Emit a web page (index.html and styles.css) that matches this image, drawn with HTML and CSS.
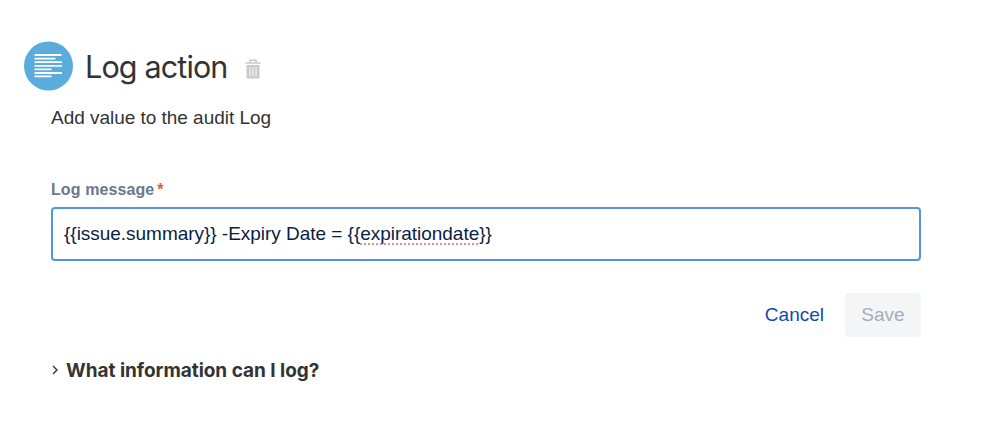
FILE: index.html
```html
<!DOCTYPE html>
<html lang="en">
<head>
    <meta charset="UTF-8">
    <meta name="viewport" content="width=device-width, initial-scale=1.0">
    <title>Log action</title>
    <link rel="stylesheet" href="styles.css">
</head>
<body>

<header class="header">
    <svg class="header-icon" viewBox="0 0 49 50">
        <circle cx="24.5" cy="25" r="24.5" fill="#5aacdd"/>
        <path d="M10.5 14h27M10.5 17.6h21M10.5 21.2h27.5M10.5 24.8h27.5M10.5 28.4h17M10.5 32h27.5M10.5 35.4h17" stroke="#fff" stroke-width="1.8"/>
    </svg>
    <h1>Log action</h1>
    <button class="delete-button" type="button" aria-label="Delete">
        <svg viewBox="0 0 16 20">
            <path d="M5 3.3V1.2h6v2.1M0.5 4h15" fill="none" stroke="#c9c9c9" stroke-width="1.6"/>
            <path d="M1.5 6h13v12.4a1 1 0 0 1-1 1h-11a1 1 0 0 1-1-1z" fill="#c9c9c9"/>
            <path d="M5 8v9.3M8 8v9.3M11 8v9.3" stroke="#fff" stroke-width="1"/>
        </svg>
    </button>
</header>

<main class="container">
    <p class="description">Add value to the audit Log</p>

    <!-- Log message form -->
    <form class="log-form">
        <div class="label" id="message-label">Log message<span class="required">*</span></div>
        <div class="text-field" role="textbox" aria-labelledby="message-label">{{issue.summary}} -Expiry Date = {{<span class="misspelled">expirationdate</span>}}</div>
        <div class="actions">
            <button class="cancel-button" type="button">Cancel</button>
            <button class="save-button" type="submit" disabled>Save</button>
        </div>
    </form>

    <!-- Help -->
    <div class="help">
        <svg class="chevron" viewBox="0 0 8 10">
            <path d="M2 1l4 4-4 4" fill="none" stroke="#333" stroke-width="1.4"/>
        </svg>
        <h2>What information can I log?</h2>
    </div>
</main>

</body>
</html>
```
FILE: styles.css
```css
* {
    box-sizing: border-box;
}
body {
    font-family: "Liberation Sans", Arial, sans-serif;
    font-size: 19px;
    margin: 0;
    padding: 41px 77px 0 24px;
    background-color: #fff;
    color: #333;
}
button {
    font-family: inherit;
    font-size: inherit;
    border: none;
    background: none;
    padding: 0;
}
.header {
    display: flex;
    align-items: center;
    height: 50px;
}
.header-icon {
    width: 49px;
    height: 50px;
}
.header h1 {
    font-family: Inter, sans-serif;
    font-size: 30.5px;
    font-weight: 400;
    line-height: 40px;
    letter-spacing: -0.85px;
    margin: 2px 0 0 12px;
}
.delete-button {
    width: 16px;
    height: 20px;
    margin: 5px 0 0 17px;
}
.delete-button svg {
    display: block;
}
.container {
    padding-left: 27px;
}
.description {
    line-height: 24px;
    letter-spacing: -0.03px;
    margin: 15px 0 0;
}
.log-form {
    margin-top: 50px;
}
.label {
    color: #6b778c;
    font-size: 16px;
    font-weight: bold;
    letter-spacing: 0.1px;
    line-height: 20px;
}
.required {
    color: #e8562f;
    margin-left: 3px;
}
.text-field {
    height: 54px;
    margin-top: 7px;
    padding: 0 11px;
    border: 2px solid #5496dd;
    border-radius: 4px;
    color: #091e42;
    letter-spacing: -0.03px;
    line-height: 49px;
    white-space: nowrap;
}
.misspelled {
    text-decoration: underline dotted #ec8a88 2px;
    text-underline-offset: 3px;
    text-decoration-skip-ink: none;
}
.actions {
    display: flex;
    justify-content: flex-end;
    gap: 21px;
    margin-top: 32px;
}
.cancel-button {
    color: #0d4bb0;
}
.save-button {
    width: 76px;
    height: 44px;
    border-radius: 4px;
    background-color: #f4f5f7;
    color: #a5adba;
}
.help {
    display: flex;
    align-items: center;
    margin-top: 22px;
}
.chevron {
    width: 8px;
    height: 10px;
    margin-bottom: 3px;
}
.help h2 {
    font-family: Inter, sans-serif;
    font-size: 19px;
    font-weight: 700;
    line-height: 24px;
    letter-spacing: -0.03px;
    margin: 0 0 0 7px;
}
```
